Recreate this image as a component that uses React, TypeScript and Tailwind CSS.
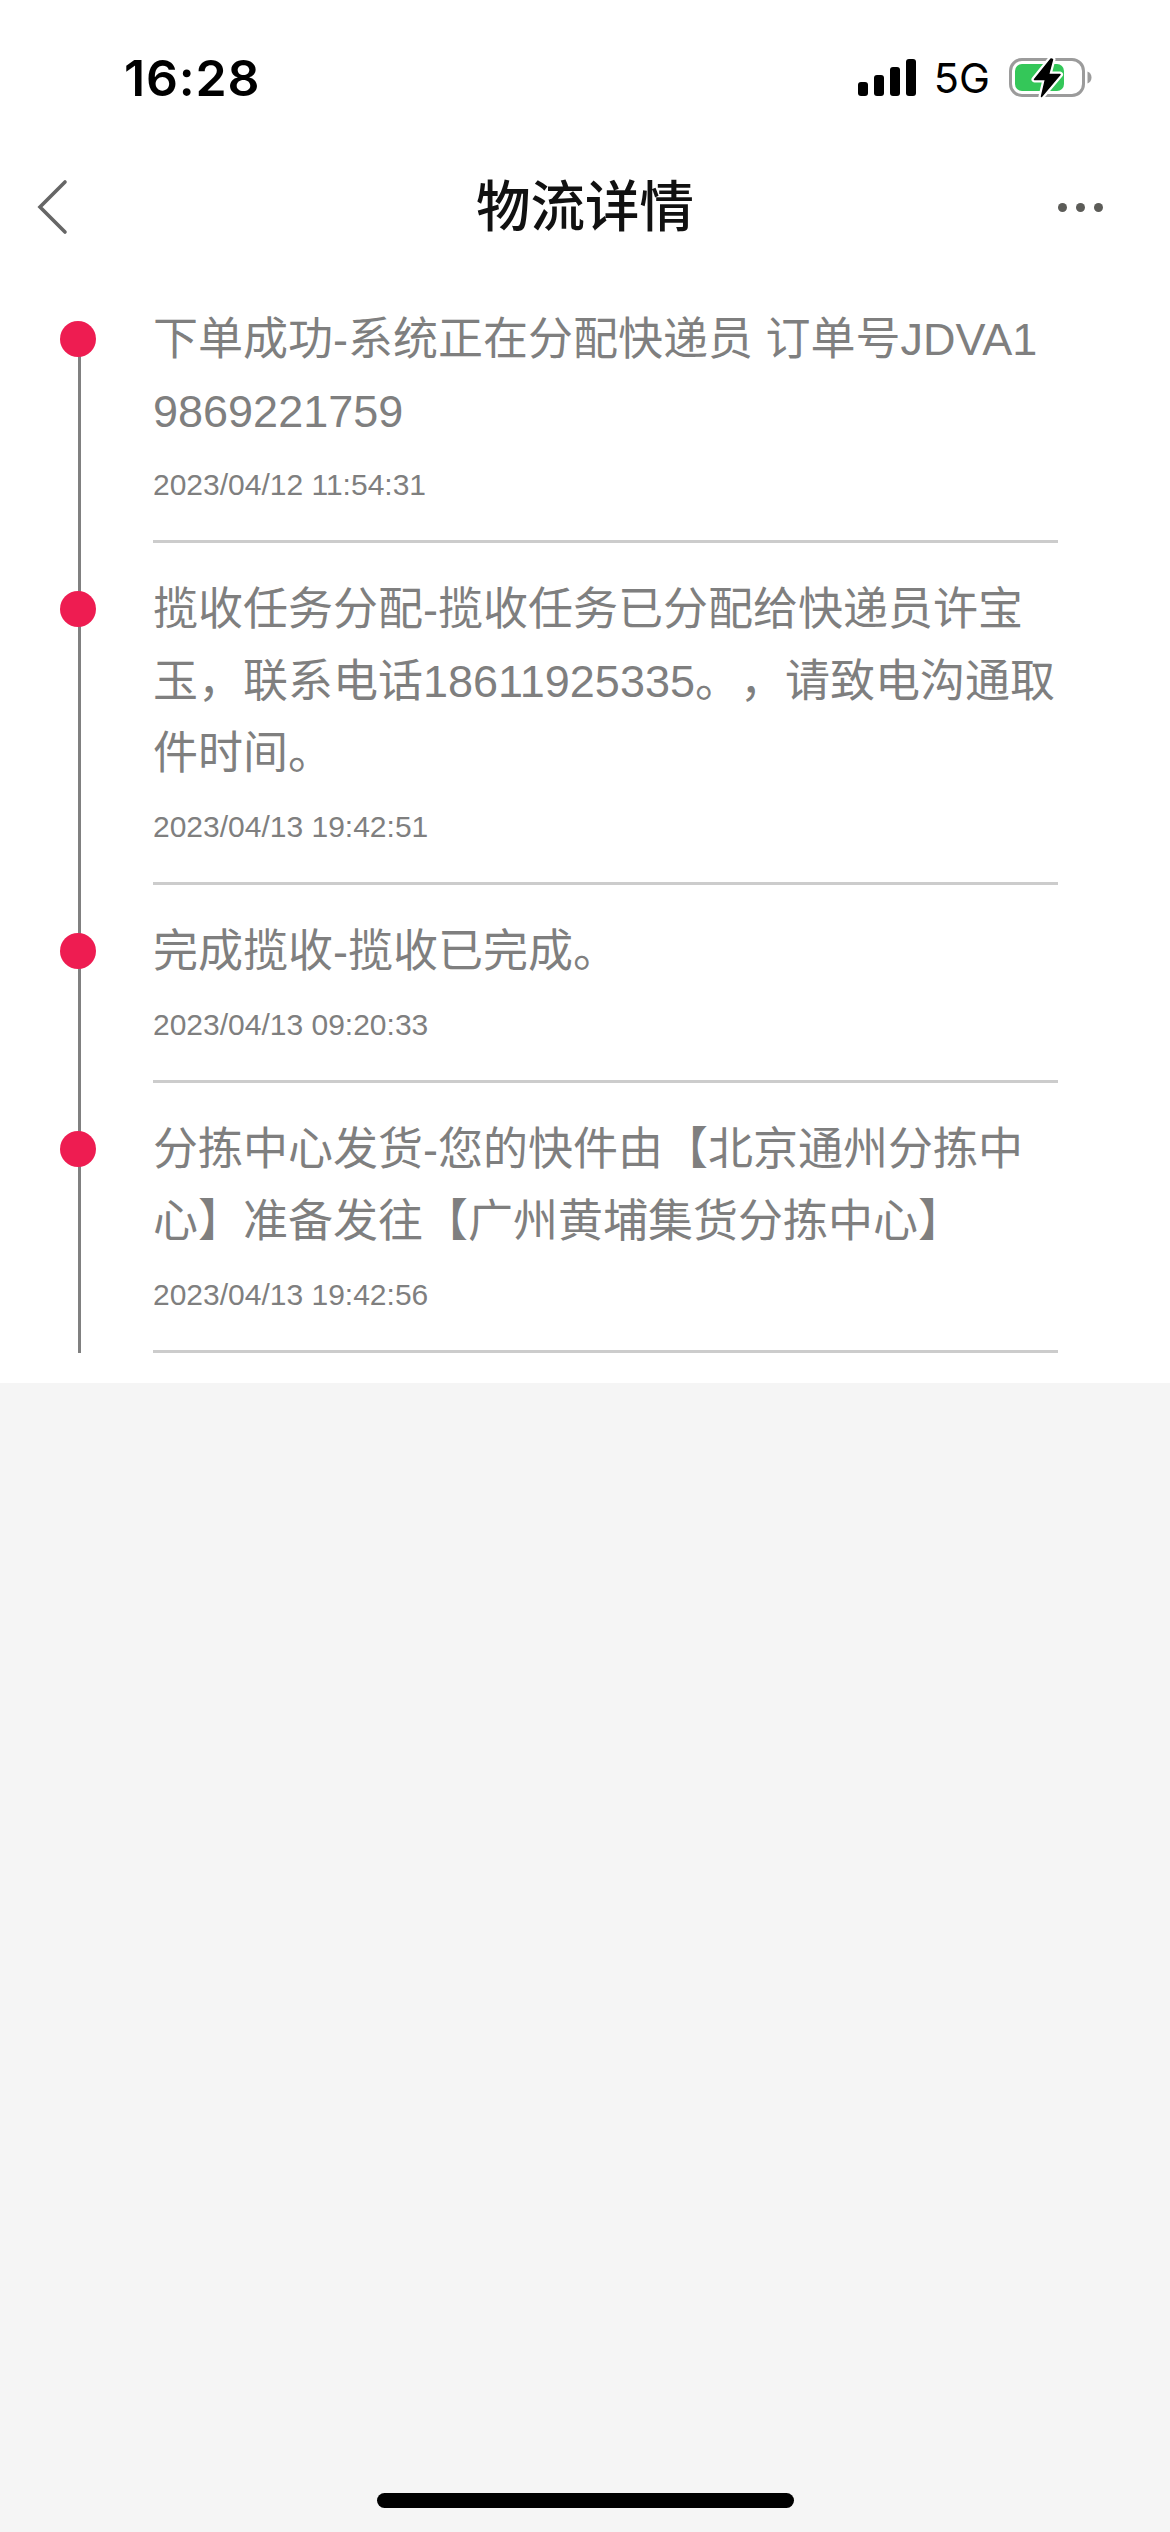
import { ReactNode } from 'react';

interface TrackingEvent {
  content: string;
  time: string;
}

const events: TrackingEvent[] = [
  {
    content: '下单成功-系统正在分配快递员 订单号JDVA19869221759',
    time: '2023/04/12 11:54:31',
  },
  {
    content:
      '揽收任务分配-揽收任务已分配给快递员许宝玉，联系电话18611925335。，请致电沟通取件时间。',
    time: '2023/04/13 19:42:51',
  },
  {
    content: '完成揽收-揽收已完成。',
    time: '2023/04/13 09:20:33',
  },
  {
    content: '分拣中心发货-您的快件由【北京通州分拣中心】准备发往【广州黄埔集货分拣中心】',
    time: '2023/04/13 19:42:56',
  },
];

const SignalIcon = () => (
  <svg width="58" height="38" viewBox="0 0 58 38" fill="#000">
    <rect x="0" y="23" width="10" height="14" rx="3" />
    <rect x="16" y="16" width="10" height="21" rx="3" />
    <rect x="32" y="8" width="10" height="29" rx="3" />
    <rect x="48" y="0" width="10" height="37" rx="3" />
  </svg>
);

const BatteryIcon = () => (
  <svg width="84" height="42" viewBox="0 0 84 42">
    <rect x="1.5" y="2.5" width="73" height="36" rx="11.5" fill="none" stroke="#9b9b9b" strokeWidth="3" />
    <path d="M78.500 14.500c2.600 1 4 3.200 4 6s-1.400 5-4 6z" fill="#9b9b9b" />
    <rect x="6" y="7" width="49" height="27" rx="7" fill="#34c759" />
    <path
      d="M42 2 25.500 22.500h11L32.500 39.500 51 17.500H39.500L43.500 2.500z"
      fill="#000"
      stroke="#fff"
      strokeWidth="6"
      strokeLinejoin="round"
      paintOrder="stroke"
    />
    <path
      d="M42 2 25.500 22.500h11L32.500 39.500 51 17.500H39.500L43.500 2.500z"
      fill="#000"
      stroke="#000"
      strokeWidth="1.500"
      strokeLinejoin="round"
    />
  </svg>
);

const StatusBar = () => (
  <div className="flex h-[156px] items-center justify-between pl-[124px] pr-[77px] font-['Inter',sans-serif] text-black">
    <span className="text-[50px] font-semibold leading-none tracking-[0.8px]">16:28</span>
    <div className="flex items-center">
      <SignalIcon />
      <span className="ml-[18px] mr-[19px] pt-[2px] text-[41.5px] leading-none">5G</span>
      <BatteryIcon />
    </div>
  </div>
);

const NavBar = () => (
  <header className="grid h-[102px] grid-cols-3 items-center">
    <button aria-label="返回" className="pl-[36px]">
      <svg width="34" height="56" viewBox="0 0 34 56" fill="none" stroke="#666" strokeWidth="3.600" strokeLinecap="round">
        <path d="M29 3 4 28l25 25" />
      </svg>
    </button>
    <h1 className="whitespace-nowrap pt-[3px] text-center text-[54.5px] font-medium leading-none text-[#111]">物流详情</h1>
    <button aria-label="更多" className="flex justify-end gap-[9px] pr-[67px]">
      <i className="size-[9px] rounded-full bg-[#5c5c58]" />
      <i className="size-[9px] rounded-full bg-[#5c5c58]" />
      <i className="size-[9px] rounded-full bg-[#5c5c58]" />
    </button>
  </header>
);

const TimelineItem = ({ first, children }: { first: boolean; children: ReactNode }) => (
  <li className="flex">
    {/* the line starts at the first dot */}
    <div className={first ? 'relative flex w-[93px] pl-[18px] pt-[60px]' : 'relative flex w-[93px] pl-[18px]'}>
      <div className="w-[3px] bg-[#808080]" />
      <span className="absolute left-0 top-[48px] size-[36px] rounded-full bg-[#ee1c51]" />
    </div>
    <div className="w-[905px] border-b-3 border-[#ccc] pb-[33px] pt-[31px] text-[#7f7f7f]">
      {children}
    </div>
  </li>
);

export default function App() {
  return (
    <div className="flex h-[2532px] w-[1170px] flex-col bg-[#f5f5f5] font-['Liberation_Sans','Noto_Sans_CJK_SC',sans-serif]">
      <div className="bg-white pb-[30px]">
        <StatusBar />
        <NavBar />
        <ul className="pl-[60px] pt-[15px]">
          {events.map((event, index) => (
            <TimelineItem key={event.time} first={index === 0}>
              <p className="break-all text-[45px] leading-[72px] [text-spacing-trim:space-all]">{event.content}</p>
              <p className="mt-[14px] text-[30px] leading-[45px]">{event.time}</p>
            </TimelineItem>
          ))}
        </ul>
      </div>
      <div className="mx-auto mb-[24px] mt-auto h-[15px] w-[417px] rounded-full bg-black" />
    </div>
  );
}
